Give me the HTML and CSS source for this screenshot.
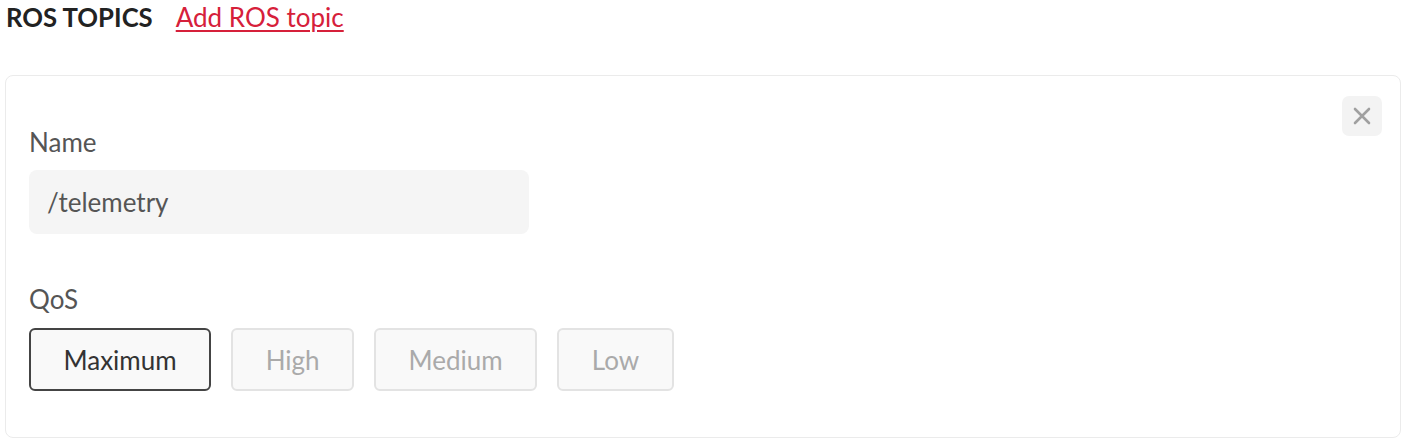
FILE: index.html
```html
<!DOCTYPE html>
<html>
<head>
<meta charset="utf-8">
<link rel="stylesheet" href="styles.css">
</head>
<body>
<div class="header">
  <span class="title">ROS TOPICS</span>
  <a class="add-link" href="#">Add ROS topic</a>
</div>
<div class="card">
  <button class="close" aria-label="Close">
    <svg width="18" height="18" viewBox="0 0 18 18"><path d="M2 2 L16 16 M16 2 L2 16" stroke="#a0a0a0" stroke-width="2.6" stroke-linecap="round"/></svg>
  </button>
  <div class="field">
    <div class="label">Name</div>
    <div class="input">/telemetry</div>
  </div>
  <div class="field qos">
    <div class="label">QoS</div>
    <div class="options">
      <div class="opt active">Maximum</div>
      <div class="opt">High</div>
      <div class="opt">Medium</div>
      <div class="opt">Low</div>
    </div>
  </div>
</div>
</body>
</html>
```
FILE: styles.css
```css
* { box-sizing: border-box; }
body {
  margin: 0;
  padding: 0 1px 0 5px;
  font-family: "Source Sans Pro", "Lato", "Noto Sans", sans-serif;
  color: #555;
  background: #fff;
}
.header {
  display: flex;
  align-items: baseline;
  gap: 23px;
  height: 34px;
  line-height: 34px;
  padding-left: 1px;
}
.title {
  font-weight: 700;
  font-size: 25.7px;
  color: #222;
}
.add-link {
  font-size: 26px;
  color: #d6203a;
  text-decoration: underline;
  text-decoration-thickness: 1.5px;
  text-underline-offset: 3px;
}
.card {
  position: relative;
  margin-top: 41px;
  border: 1.5px solid #ebebeb;
  border-radius: 8px;
  padding: 52px 24px 45px 23px;
  height: 363px;
}
.close {
  position: absolute;
  top: 20px;
  right: 18px;
  width: 40px;
  height: 40px;
  border: none;
  border-radius: 7px;
  background: #f3f3f3;
  display: flex;
  align-items: center;
  justify-content: center;
  padding: 0;
}
.label {
  font-size: 26px;
  line-height: 28px;
  color: #555;
}
.input {
  margin-top: 14px;
  width: 500px;
  height: 64px;
  background: #f5f5f5;
  border-radius: 8px;
  padding-left: 18px;
  display: flex;
  align-items: center;
  font-size: 26px;
  color: #555;
}
.qos { margin-top: 51px; }
.options {
  margin-top: 15px;
  display: flex;
  gap: 20px;
}
.opt {
  height: 63px;
  display: flex;
  align-items: center;
  justify-content: center;
  padding: 0 32.5px;
  font-size: 26px;
  color: #aaa;
  background: #f9f9f9;
  border: 2px solid #e3e3e3;
  border-radius: 6px;
}
.opt.active {
  color: #333;
  border-color: #444;
}
```
